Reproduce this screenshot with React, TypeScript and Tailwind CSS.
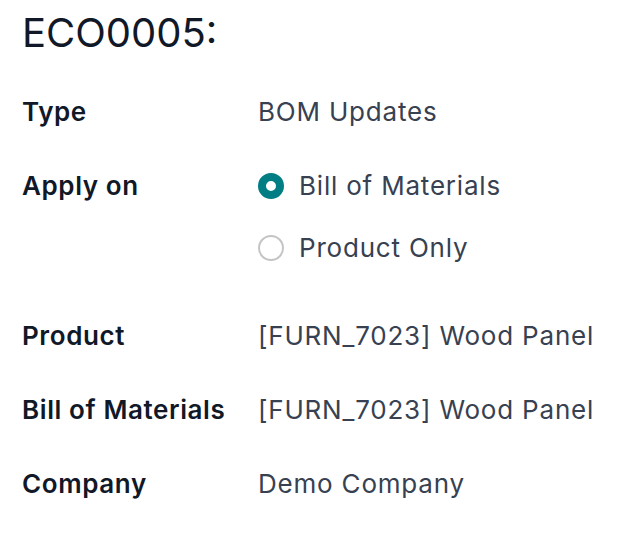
import React from "react";

function Radio({ checked, label }: { checked?: boolean; label: string }) {
  return (
    <div className="flex items-center gap-[15px] h-[30px]">
      {checked ? (
        <span className="w-[26px] h-[26px] rounded-full border-[8px] border-[#017e84] bg-white shrink-0" />
      ) : (
        <span className="w-[26px] h-[26px] rounded-full border-2 border-[#c4c4c4] bg-white shrink-0" />
      )}
      <span>{label}</span>
    </div>
  );
}

function Row({ label, children, className = "" }: { label: string; children: React.ReactNode; className?: string }) {
  return (
    <div className={"flex py-[22px] " + className}>
      <div className="w-[236px] shrink-0 font-semibold text-[#111827] tracking-[0.6px]">{label}</div>
      <div className="text-[#374151] tracking-[0.8px]">{children}</div>
    </div>
  );
}

export default function App() {
  return (
    <div
      className="w-[642px] h-[539px] bg-white pl-[22px] pt-[9px] text-[26px] leading-[30px]"
      style={{ fontFamily: "Inter, 'Noto Sans', sans-serif" }}
    >
      <h1 className="text-[40px] leading-[48px] font-normal text-[#111827] mb-[18px]">ECO0005:</h1>
      <Row label="Type">BOM Updates</Row>
      <Row label="Apply on" className="mb-[14px]">
        <div className="flex flex-col gap-[32px]">
          <Radio checked label="Bill of Materials" />
          <Radio label="Product Only" />
        </div>
      </Row>
      <Row label="Product">[FURN_7023] Wood Panel</Row>
      <Row label="Bill of Materials">[FURN_7023] Wood Panel</Row>
      <Row label="Company">Demo Company</Row>
    </div>
  );
}
